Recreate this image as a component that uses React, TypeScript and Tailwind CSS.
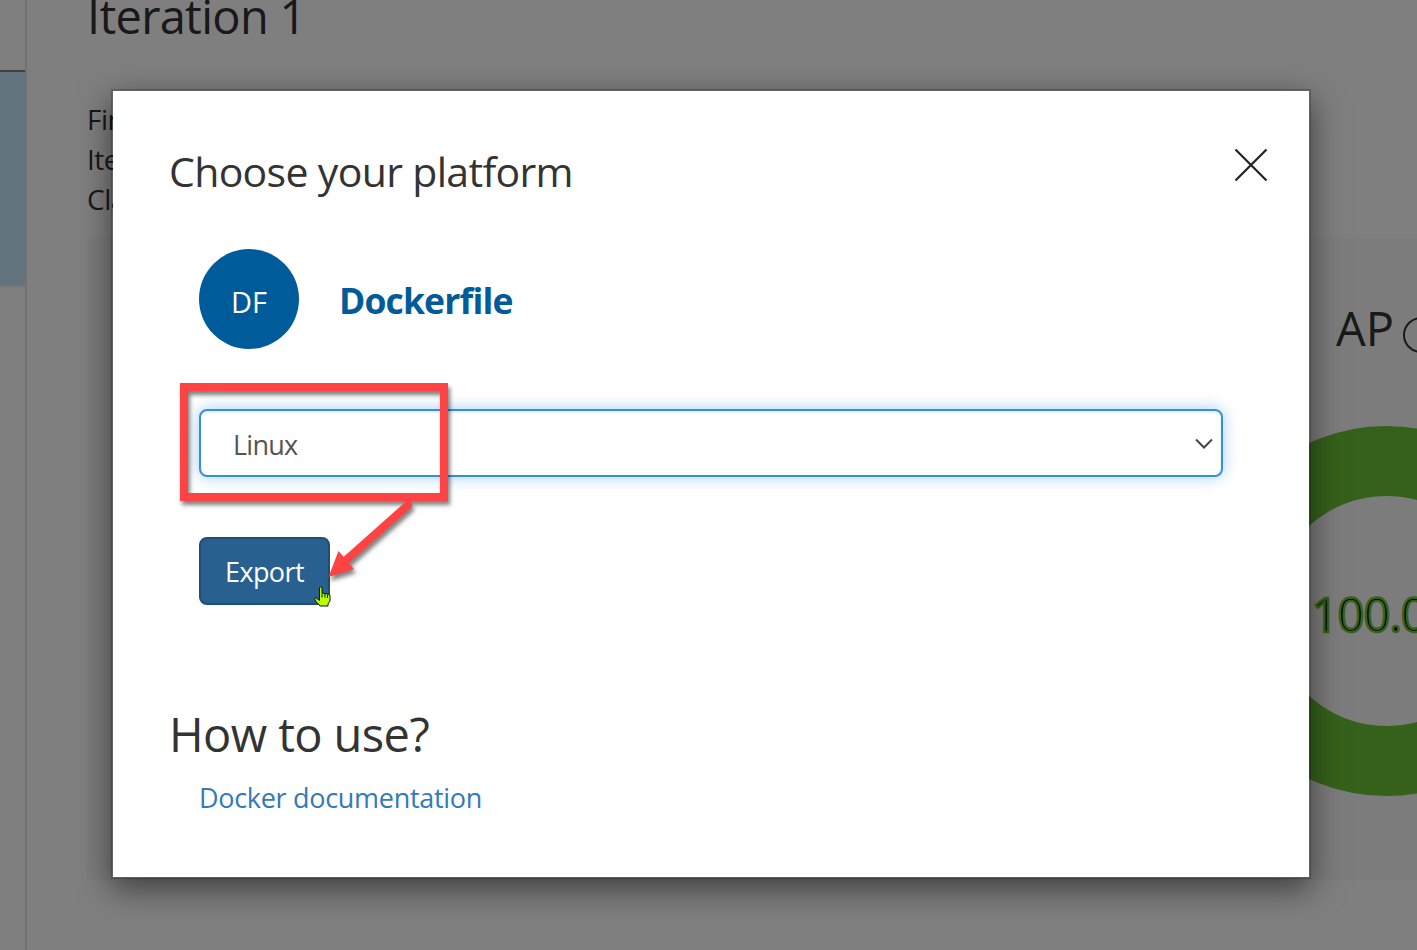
import React from "react";

const font = "font-['Open_Sans','Noto_Sans',sans-serif]";

function Sidebar() {
  return (
    <aside className="flex h-full w-[27px] shrink-0 flex-col border-r-2 border-[#e2e2e2] pt-[70px]">
      <div className="h-[217px] border-t-2 border-b-2 border-t-[#808080] border-b-[#eaeaea] bg-[#c6e6fd]" />
    </aside>
  );
}

function Gauge() {
  return (
    <svg className="mt-[68px] ml-[1114px] block" width="370" height="370" viewBox="0 0 370 370">
      <circle cx="185.500" cy="185" r="150" fill="none" stroke="#6cc236" strokeWidth="70" />
      <text x="110.500" y="206" fontSize="47" letterSpacing="-0.9" fill="#000" stroke="#6cc236" strokeWidth="2.4">
        100.0%
      </text>
    </svg>
  );
}

function Background() {
  return (
    <div className="flex h-full w-full bg-white text-[#333]">
      <Sidebar />
      <main className="flex grow flex-col overflow-hidden pl-[60px]">
        <h1 className="-mt-[16px] text-[47px] leading-[64px] tracking-[-0.7px] whitespace-nowrap">Iteration 1</h1>
        <div className="mt-[51px] text-[28px] leading-[40px] tracking-[-0.5px]">
          <p>Fin</p>
          <p>Ite</p>
          <p>Cla</p>
        </div>
        <section className="mt-[19px] h-[642px] w-[1400px] bg-[#f8f8f8] pt-[60px]">
          <div className="flex h-[60px] items-center pl-[1249px]">
            <span className="text-[47px] leading-[60px]">AP</span>
            <span className="mt-[14px] ml-[9px] size-[36px] shrink-0 rounded-full border-2 border-[#333]" />
          </div>
          <Gauge />
        </section>
      </main>
    </div>
  );
}

function Annotations() {
  return (
    <svg className="pointer-events-none absolute top-0 left-0" width="1417" height="950" viewBox="0 0 1417 950">
      <g style={{ filter: "drop-shadow(2px 4px 2px rgba(0,0,0,0.5))" }}>
        <rect x="184" y="387" width="260" height="110" fill="none" stroke="#ff4343" strokeWidth="8" />
      </g>
      <g style={{ filter: "drop-shadow(2px 4px 2px rgba(0,0,0,0.5))" }}>
        <path d="M408 505L345 561" stroke="#ff4343" strokeWidth="8" strokeLinecap="round" />
        <path d="M328.500 577L338.500 551L354 569Z" fill="#ff4343" />
      </g>
      <path
        d="M319.500 587.500q1.500 -1.500 2.500 0v5.500l6 1q2 .5 2 2v5l-2 3v2h-8l-4.500 -5q-1.500 -2.500 0 -3.500l4 3Z"
        fill="#b6ff00"
        stroke="#111"
        strokeWidth="1"
      />
      <path d="M322 593.500v4M325 594v3.500M327.500 594.500v3.500" stroke="#111" strokeWidth="1" />
    </svg>
  );
}

function Dialog() {
  return (
    <div className="flex h-[790px] w-[1200px] flex-col items-start border-2 border-black/20 bg-white bg-clip-padding pr-[41px] pl-[56px] text-[#333] shadow-[0_10px_30px_rgba(0,0,0,0.5)]">
      <header className="mt-[48px] flex w-full items-start justify-between">
        <h2 className="text-[41px] leading-[64px] tracking-[-0.67px]">Choose your platform</h2>
        <svg className="mt-[9px]" width="34" height="34" viewBox="0 0 34 34" stroke="#222" strokeWidth="2.2">
          <path d="M1.500 1.500L32.500 32.500M32.500 1.500L1.500 32.500" />
        </svg>
      </header>
      <div className="mt-[46px] ml-[30px] flex items-center">
        <div className="flex size-[100px] items-center justify-center rounded-full bg-[#005b9a] pt-[6px] text-[29px] text-white">DF</div>
        <span className="ml-[40px] pt-[3px] text-[35.5px] font-bold tracking-[-0.85px] text-[#005b9a]">Dockerfile</span>
      </div>
      <div className="mt-[60px] ml-[30px] flex h-[68px] w-[1024px] items-center justify-between rounded-lg border-2 border-[#3390df] pr-[8px] pl-[32px] text-[27px] tracking-[-0.75px] text-[#555] shadow-[inset_0_2px_2px_rgba(0,0,0,0.075),0_0_16px_rgba(102,175,233,0.6)]">
        <span className="pt-[5px]">Linux</span>
        <svg className="mt-[2px]" width="18" height="12" viewBox="0 0 18 12" fill="none" stroke="#444" strokeWidth="2">
          <path d="M1 1.500L9 9.500L17 1.500" />
        </svg>
      </div>
      <button className="mt-[60px] ml-[30px] h-[68px] w-[131px] rounded-lg border-2 border-[#204d74] bg-[#286090] pt-[3px] text-[27px] tracking-[-0.6px] text-white">
        Export
      </button>
      <h2 className="mt-[97px] text-[47px] leading-[64px] tracking-[-0.6px]">How to use?</h2>
      <a className="mt-[12px] ml-[30px] text-[27px] leading-[40px] tracking-[-0.3px] text-[#337ab7]">Docker documentation</a>
    </div>
  );
}

export default function App() {
  return (
    <div className={`relative h-[950px] w-[1417px] overflow-hidden ${font}`}>
      <Background />
      <div className="absolute inset-0 bg-black/50 pt-[89px] pl-[111px]">
        <Dialog />
      </div>
      <Annotations />
    </div>
  );
}
